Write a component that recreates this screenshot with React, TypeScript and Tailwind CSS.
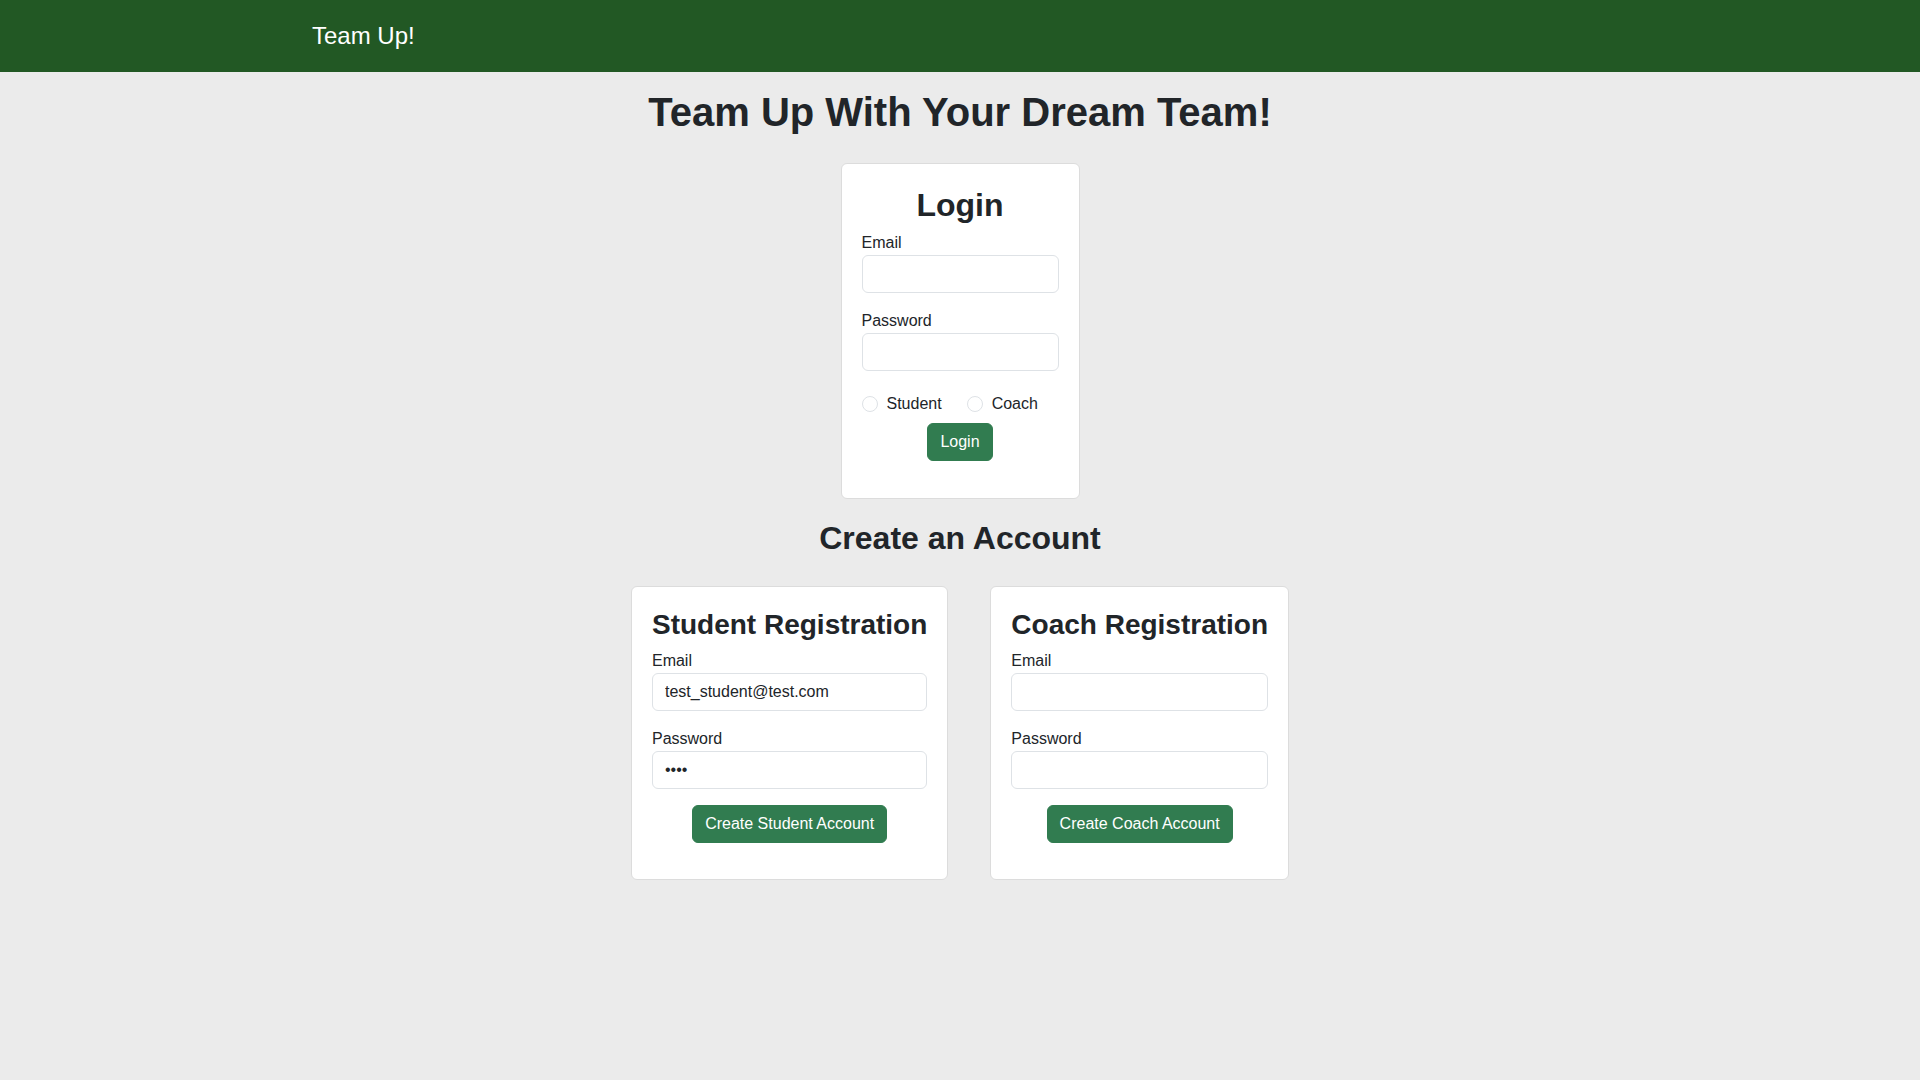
import React from "react";

const font = { fontFamily: '"Liberation Sans", Arial, Helvetica, sans-serif' };

function Field({ label, type = "text", value, last }: { label: string; type?: string; value?: string; last?: boolean }) {
  return (
    <div className={last ? "" : "mb-4"}>
      <label className="block text-base leading-6 text-[#212529]">{label}</label>
      <input
        type={type}
        defaultValue={value}
        className="block w-full h-[38px] px-3 text-base leading-6 text-[#212529] bg-white border border-[#dee2e6] rounded-[6px] outline-none"
        style={font}
      />
    </div>
  );
}

function Button({ children }: { children: React.ReactNode }) {
  return (
    <div className="flex justify-center">
      <button
        type="button"
        className="h-[38px] px-[12px] text-base leading-6 text-white bg-[#317c50] border border-[#317c50] rounded-[6px]"
        style={font}
      >
        {children}
      </button>
    </div>
  );
}

function Radio({ label }: { label: string }) {
  return (
    <label className="flex items-center">
      <span className="w-4 h-4 rounded-full border border-[#dee2e6] bg-white" />
      <span className="ml-[9px] text-base leading-6 text-[#212529]">{label}</span>
    </label>
  );
}

function RegCard({ title, email, password }: { title: string; email?: string; password?: string }) {
  return (
    <div className="bg-white border border-[#dcdcdc] rounded-[6px] pt-[21px] px-5 pb-5">
      <h3 className="text-[28px] leading-[34px] font-bold text-[#212529] mb-[7px] whitespace-nowrap">{title}</h3>
      <Field label="Email" value={email} />
      <Field label="Password" type="password" value={password} />
      <Button>{title.startsWith("Student") ? "Create Student Account" : "Create Coach Account"}</Button>
      <div className="h-4" />
    </div>
  );
}

export default function App() {
  return (
    <div className="min-h-[1080px] bg-[#ebebeb] text-[#212529]" style={font}>
      <nav className="h-[72px] bg-[#225824] flex items-center">
        <div className="pl-[312px] text-[24px] leading-[28px] text-white">Team Up!</div>
      </nav>
      <main className="flex flex-col items-center">
        <h1 className="mt-[16px] mb-[6px] text-[40px] leading-[48px] font-bold text-[#212529]">
          Team Up With Your Dream Team!
        </h1>
        <div className="mt-[21px] w-[239px] bg-white border border-[#dcdcdc] rounded-[6px] pt-[22px] px-5 pb-[21px]">
          <h2 className="text-[32px] leading-[38px] font-bold text-center mb-[7px]">Login</h2>
          <Field label="Email" />
          <Field label="Password" type="password" last />
          <div className="mt-[21px] flex items-center gap-[25px]">
            <Radio label="Student" />
            <Radio label="Coach" />
          </div>
          <div className="mt-[7px]">
            <Button>Login</Button>
          </div>
          <div className="h-4" />
        </div>
        <h2 className="mt-[20px] mb-[8px] text-[32px] leading-[38px] font-bold">Create an Account</h2>
        <div className="mt-[21px] flex items-start gap-[42px]">
          <RegCard title="Student Registration" email="test_student@test.com" password="abcd" />
          <RegCard title="Coach Registration" />
        </div>
      </main>
    </div>
  );
}
